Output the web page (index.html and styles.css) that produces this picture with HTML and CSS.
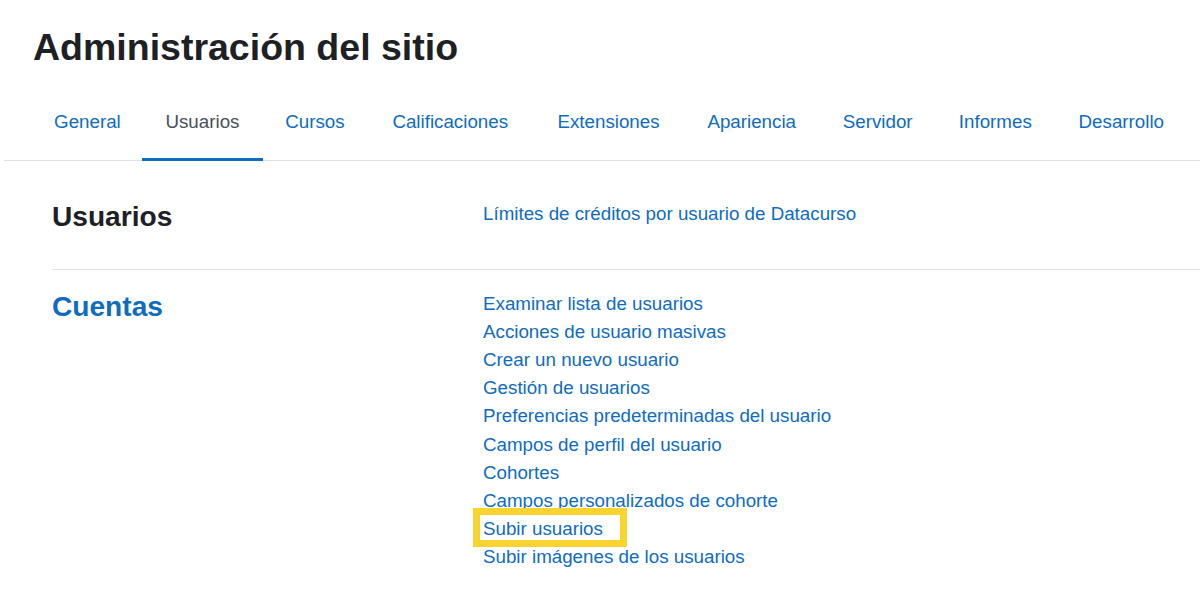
FILE: index.html
```html
<!DOCTYPE html>
<html lang="es">
<head>
<meta charset="utf-8">
<title>Administración del sitio</title>
<link rel="stylesheet" href="styles.css">
</head>
<body>
<div class="page">
  <header class="page-header">
    <h1 class="page-title">Administración del sitio</h1>
  </header>
  <nav class="tabs">
    <ul class="tab-list">
      <li><a class="tab" href="#" data-text="General">General</a></li>
      <li><a class="tab active" href="#" data-text="Usuarios">Usuarios</a></li>
      <li><a class="tab" href="#" data-text="Cursos">Cursos</a></li>
      <li><a class="tab" href="#" data-text="Calificaciones">Calificaciones</a></li>
      <li><a class="tab" href="#" data-text="Extensiones">Extensiones</a></li>
      <li><a class="tab" href="#" data-text="Apariencia">Apariencia</a></li>
      <li><a class="tab" href="#" data-text="Servidor">Servidor</a></li>
      <li><a class="tab" href="#" data-text="Informes">Informes</a></li>
      <li><a class="tab" href="#" data-text="Desarrollo">Desarrollo</a></li>
    </ul>
  </nav>
  <main class="content">
    <section class="row first">
      <h2 class="row-title">Usuarios</h2>
      <ul class="links">
        <li><a href="#">Límites de créditos por usuario de Datacurso</a></li>
      </ul>
    </section>
    <section class="row">
      <h2 class="row-title link-title"><a href="#">Cuentas</a></h2>
      <ul class="links">
        <li><a href="#">Examinar lista de usuarios</a></li>
        <li><a href="#">Acciones de usuario masivas</a></li>
        <li><a href="#">Crear un nuevo usuario</a></li>
        <li><a href="#">Gestión de usuarios</a></li>
        <li><a href="#">Preferencias predeterminadas del usuario</a></li>
        <li><a href="#">Campos de perfil del usuario</a></li>
        <li><a href="#">Cohortes</a></li>
        <li><a href="#">Campos personalizados de cohorte</a></li>
        <li class="highlighted"><a href="#">Subir usuarios</a></li>
        <li><a href="#">Subir imágenes de los usuarios</a></li>
      </ul>
    </section>
  </main>
</div>
</body>
</html>
```
FILE: styles.css
```css
*, *::before, *::after { box-sizing: border-box; }
html, body {
  margin: 0;
  padding: 0;
  background: #ffffff;
}
body {
  font-family: "Liberation Sans", Arial, sans-serif;
  font-size: 18.75px;
  line-height: 1.5;
  color: #1d2125;
  overflow: hidden;
}
a { color: #0f6cbf; text-decoration: none; }

.page {
  padding-left: 4px;
}
.page-header {
  padding: 25px 0 0 29px;
}
.page-title {
  margin: 0;
  font-size: 37.5px;
  line-height: 1.2;
  font-weight: 700;
  color: #1d2125;
}

.tabs {
  margin-top: 18px;
  border-bottom: 1px solid #dee2e6;
}
.tab-list {
  list-style: none;
  margin: 0;
  padding: 0 0 0 28.5px;
  display: flex;
}
.tab {
  display: flex;
  flex-direction: column;
  align-items: center;
  padding: 20px 20px 22px;
  border-bottom: 3px solid transparent;
  margin-bottom: -1px;
  line-height: 28.125px;
}
.tab::after {
  content: attr(data-text);
  font-weight: 700;
  height: 0;
  overflow: hidden;
  visibility: hidden;
}
.tab.active {
  color: #495057;
  border-bottom-color: #0f6cbf;
}

.content {
  padding-left: 48px;
}
.row {
  display: grid;
  grid-template-columns: 431px 1fr;
  padding: 20px 0;
}
.row.first {
  padding-top: 39px;
  border-bottom: 1px solid #dee2e6;
}
.row-title {
  margin: 0 0 15px;
  font-size: 28.125px;
  line-height: 1.2;
  font-weight: 700;
  color: #1d2125;
}
.links {
  list-style: none;
  margin: 0;
  padding: 0;
  line-height: 28.125px;
}
.highlighted {
  position: relative;
}
.highlighted::after {
  content: "";
  position: absolute;
  left: -10px;
  top: -7px;
  width: 154px;
  height: 39px;
  border: 7px solid #f9d330;
  pointer-events: none;
}
```
